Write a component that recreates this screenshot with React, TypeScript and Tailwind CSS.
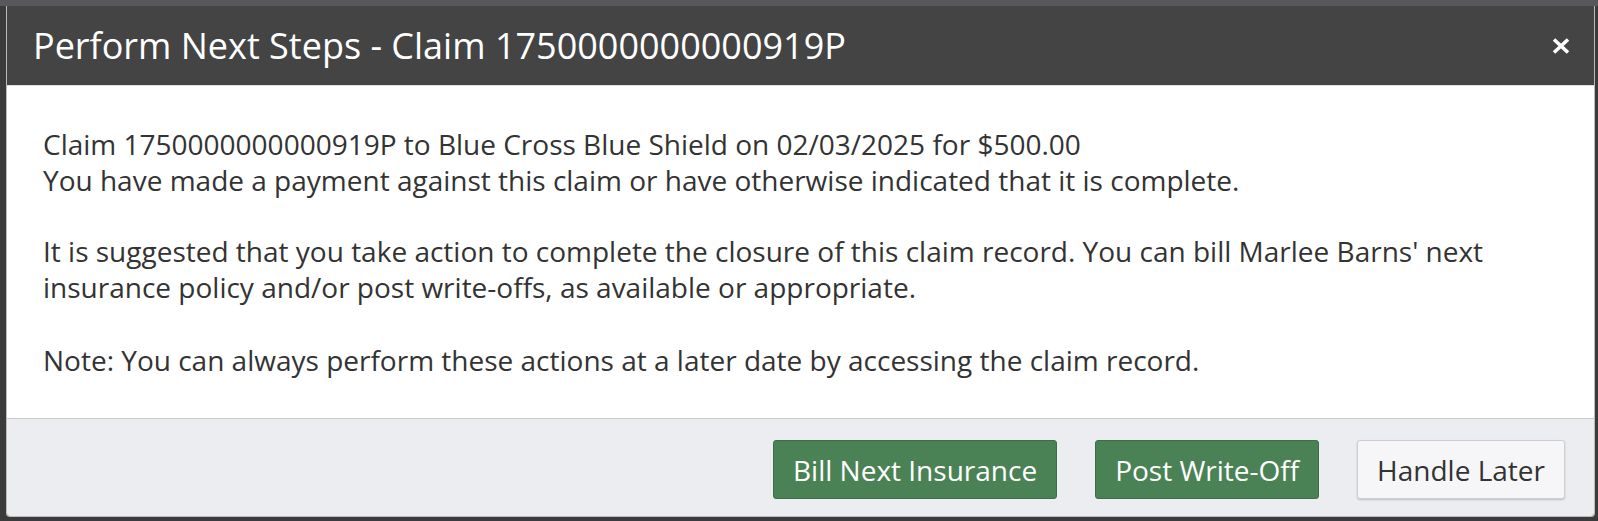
import React from "react"

const NextStepsModal: React.FC = () => {
    return (
        <div className="ml-[6px] w-[1589px] border-x border-b border-[#bcbcbc] rounded-b-[4px] overflow-hidden">
            <div className="h-[80px] bg-[#444444] flex items-center justify-between pl-[26px] pr-[24px] border-b border-[#dedede]">
                <h4 className="text-[36px] text-white leading-none">Perform Next Steps - Claim 1750000000000919P</h4>
                <button className="w-[18px] h-[16px] flex items-center justify-center" aria-label="Close">
                    <svg width="18" height="16" viewBox="0 0 18 16">
                        <path d="M2 1.5 L16 14.5 M16 1.5 L2 14.5" stroke="white" strokeWidth="3.6" strokeLinecap="butt" />
                    </svg>
                </button>
            </div>
            <div className="bg-white pl-[36px] pr-[36px] pt-[40px] pb-[40px] text-[28px] leading-[36px] text-[#333333]">
                <p>
                    Claim 1750000000000919P to Blue Cross Blue Shield on 02/03/2025 for $500.00
                    <br />
                    You have made a payment against this claim or have otherwise indicated that it is complete.
                </p>
                <p className="mt-[35px]">
                    It is suggested that you take action to complete the closure of this claim record. You can bill Marlee Barns' next
                    <br />
                    insurance policy and/or post write-offs, as available or appropriate.
                </p>
                <p className="mt-[37px]">
                    Note: You can always perform these actions at a later date by accessing the claim record.
                </p>
            </div>
            <div className="h-[98px] bg-[#ecedf1] border-t border-[#c9c9c9] flex items-center justify-end gap-[38px] pr-[29px] pt-[4px]">
                <button className="h-[59px] px-[19px] rounded-[3px] bg-[#4b8255] border border-[#3d6e47] text-white text-[28px]">
                    Bill Next Insurance
                </button>
                <button className="h-[59px] px-[19px] rounded-[3px] bg-[#4b8255] border border-[#3d6e47] text-white text-[28px]">
                    Post Write-Off
                </button>
                <button className="h-[59px] px-[19px] rounded-[3px] bg-[#f6f6f8] border border-[#cfcfcf] shadow-[0_1px_2px_rgba(0,0,0,0.2)] text-[#333333] text-[28px]">
                    Handle Later
                </button>
            </div>
        </div>
    )
}

export default function App() {
    return (
        <div className="w-[1598px] h-[521px] bg-[#3b3b3b] overflow-hidden" style={{ fontFamily: "'Open Sans', sans-serif" }}>
            <div className="h-[6px] bg-[#57585c]" />
            <NextStepsModal />
        </div>
    )
}
